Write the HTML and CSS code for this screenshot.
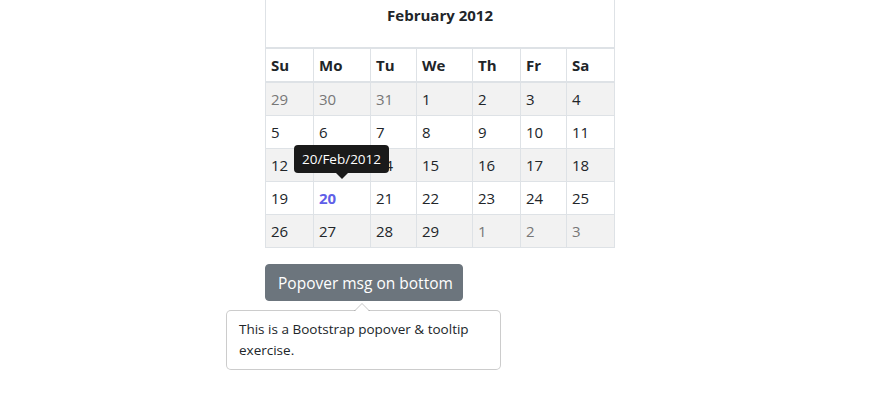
FILE: index.html
```html
<!DOCTYPE html>
<html lang="en">
<head>
<meta charset="utf-8">
<title>Calendar</title>
<link rel="stylesheet" href="styles.css">
</head>
<body>
<div class="page">
  <div class="cal-wrap">
    <table class="cal">
      <colgroup>
        <col class="c1"><col class="c2"><col class="c3"><col class="c4"><col class="c5"><col class="c6"><col class="c7">
      </colgroup>
      <thead>
        <tr class="title-row"><th colspan="7">February 2012</th></tr>
        <tr class="days-row"><th>Su</th><th>Mo</th><th>Tu</th><th>We</th><th>Th</th><th>Fr</th><th>Sa</th></tr>
      </thead>
      <tbody>
        <tr class="odd"><td class="muted">29</td><td class="muted">30</td><td class="muted">31</td><td>1</td><td>2</td><td>3</td><td>4</td></tr>
        <tr><td>5</td><td>6</td><td>7</td><td>8</td><td>9</td><td>10</td><td>11</td></tr>
        <tr class="odd"><td>12</td><td>13</td><td>14</td><td>15</td><td>16</td><td>17</td><td>18</td></tr>
        <tr><td>19</td><td class="today">20</td><td>21</td><td>22</td><td>23</td><td>24</td><td>25</td></tr>
        <tr class="odd"><td>26</td><td>27</td><td>28</td><td>29</td><td class="muted">1</td><td class="muted">2</td><td class="muted">3</td></tr>
      </tbody>
    </table>
    <div class="tooltip">20/Feb/2012</div>
  </div>
  <div class="btn-wrap">
    <button class="btn">Popover msg on bottom</button>
    <div class="popover">This is a Bootstrap popover &amp; tooltip exercise.</div>
  </div>
</div>
</body>
</html>
```
FILE: styles.css
```css
html, body {
  margin: 0;
  padding: 0;
  background: #fff;
}
body {
  font-family: "Open Sans", "Noto Sans", sans-serif;
  color: #212529;
}
.page {
  padding-left: 265px;
}
.cal-wrap {
  position: relative;
  width: 349px;
}
.cal {
  border-collapse: collapse;
  table-layout: fixed;
  width: 349px;
  font-size: 15px;
}
.c1 { width: 48px; }
.c2 { width: 57px; }
.c3 { width: 46px; }
.c4 { width: 56px; }
.c5 { width: 48px; }
.c6 { width: 46px; }
.c7 { width: 48px; }
.cal th, .cal td {
  text-align: left;
  padding: 5px 5px;
  line-height: 22px;
  border: 1px solid #dee2e6;
  vertical-align: middle;
}
.title-row th {
  text-align: center;
  border-top: none;
  border-bottom: 2px solid #dee2e6;
  font-size: 15px;
  font-weight: 700;
  padding: 4px 5px 21px;
}
.days-row th {
  border-bottom: 2px solid #dee2e6;
  font-weight: 700;
}
.cal td {
  font-weight: 400;
}
.cal tr.odd td {
  background: #f2f2f2;
}
.cal td.muted {
  color: #777;
}
.cal td.today {
  color: #5f5fe8;
  font-weight: 700;
}
.tooltip {
  position: absolute;
  left: 29px;
  top: 145px;
  background: #1a1a1a;
  color: #fff;
  font-size: 13.5px;
  line-height: 20px;
  padding: 4px 8px;
  border-radius: 4px;
  white-space: nowrap;
}
.tooltip::after {
  content: "";
  position: absolute;
  left: 42px;
  bottom: -6px;
  border-left: 6px solid transparent;
  border-right: 6px solid transparent;
  border-top: 6px solid #1a1a1a;
}
.btn-wrap {
  position: relative;
  margin-top: 16px;
  height: 130px;
}
.btn {
  font-family: inherit;
  font-size: 15.5px;
  line-height: 24px;
  color: #fff;
  background: #6c757d;
  border: 1px solid #6c757d;
  border-radius: 4px;
  padding: 6px 12px;
  width: 198px;
  height: 37px;
  box-sizing: border-box;
  white-space: nowrap;
}
.popover {
  position: absolute;
  left: -39px;
  top: 46px;
  width: 275px;
  box-sizing: border-box;
  border: 1px solid rgba(0,0,0,0.2);
  border-radius: 5px;
  padding: 8px 12px;
  font-size: 13.5px;
  line-height: 21px;
  color: #212529;
  background: #fff;
}
.popover::before {
  content: "";
  position: absolute;
  left: 127px;
  top: -8px;
  border-left: 8px solid transparent;
  border-right: 8px solid transparent;
  border-bottom: 8px solid rgba(0,0,0,0.22);
}
.popover::after {
  content: "";
  position: absolute;
  left: 128px;
  top: -7px;
  border-left: 7px solid transparent;
  border-right: 7px solid transparent;
  border-bottom: 7px solid #fff;
}
```
